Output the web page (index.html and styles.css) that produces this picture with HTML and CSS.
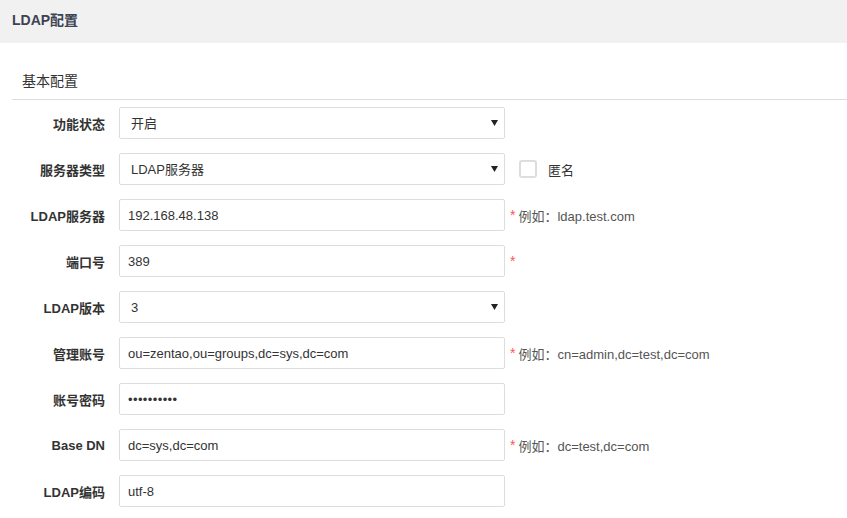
FILE: index.html
```html
<!DOCTYPE html>
<html lang="zh">
<head>
<meta charset="utf-8">
<link rel="stylesheet" href="styles.css">
</head>
<body>
<div class="header">LDAP配置</div>
<div class="section">
  <div class="section-title">基本配置</div>
</div>
<div class="form">
  <div class="row">
    <label class="label">功能状态</label>
    <div class="select-wrap">
      <select class="control select"><option>开启</option></select>
      <svg class="caret" width="7" height="6" viewBox="0 0 7 6"><path d="M0 0H7L3.5 6Z" fill="#222"/></svg>
    </div>
  </div>
  <div class="row">
    <label class="label">服务器类型</label>
    <div class="select-wrap">
      <select class="control select"><option>LDAP服务器</option></select>
      <svg class="caret" width="7" height="6" viewBox="0 0 7 6"><path d="M0 0H7L3.5 6Z" fill="#222"/></svg>
    </div>
    <div class="check"><span class="box"></span><span class="check-text">匿名</span></div>
  </div>
  <div class="row">
    <label class="label">LDAP服务器</label>
    <input class="control input" value="192.168.48.138">
    <div class="hint"><span class="star">*</span>例如：ldap.test.com</div>
  </div>
  <div class="row">
    <label class="label">端口号</label>
    <input class="control input" value="389">
    <div class="hint"><span class="star">*</span></div>
  </div>
  <div class="row">
    <label class="label">LDAP版本</label>
    <div class="select-wrap">
      <select class="control select"><option>3</option></select>
      <svg class="caret" width="7" height="6" viewBox="0 0 7 6"><path d="M0 0H7L3.5 6Z" fill="#222"/></svg>
    </div>
  </div>
  <div class="row">
    <label class="label">管理账号</label>
    <input class="control input" value="ou=zentao,ou=groups,dc=sys,dc=com">
    <div class="hint"><span class="star">*</span>例如：cn=admin,dc=test,dc=com</div>
  </div>
  <div class="row">
    <label class="label">账号密码</label>
    <input class="control input pw" type="password" value="1234567890">
  </div>
  <div class="row">
    <label class="label">Base DN</label>
    <input class="control input" value="dc=sys,dc=com">
    <div class="hint"><span class="star">*</span>例如：dc=test,dc=com</div>
  </div>
  <div class="row">
    <label class="label">LDAP编码</label>
    <input class="control input" value="utf-8">
  </div>
</div>
</body>
</html>
```
FILE: styles.css
```css
* { box-sizing: border-box; }
html, body {
  margin: 0;
  padding: 0;
  background: #fff;
  font-family: "Liberation Sans", Arial, "Noto Sans CJK SC", sans-serif;
  font-size: 13px;
  color: #333;
  overflow: hidden;
}
.header {
  height: 43px;
  line-height: 41px;
  padding-left: 12px;
  background: #f1f1f1;
  font-weight: bold;
  font-size: 14px;
  color: #3c4353;
}
.section {
  margin-left: 12px;
  border-bottom: 1px solid #ddd;
  padding: 28px 0 8px 10px;
}
.section-title {
  font-size: 14px;
  line-height: 20px;
  color: #333;
}
.form {
  padding-top: 7px;
  display: flex;
  flex-direction: column;
  gap: 14px;
}
.row {
  display: flex;
  align-items: center;
  height: 32px;
}
.label {
  width: 105px;
  text-align: right;
  font-weight: bold;
  color: #333;
  margin-right: 14px;
  flex: none;
}
.control {
  width: 386px;
  height: 32px;
  border: 1px solid #ddd;
  border-radius: 2px;
  background: #fff;
  font-family: inherit;
  font-size: 13px;
  color: #333;
  outline: none;
}
.input {
  padding: 0 8px;
  flex: none;
}
.pw {
  font-size: 13px;
  letter-spacing: 0.4px;
}
.select-wrap {
  position: relative;
  flex: none;
}
.select {
  appearance: none;
  -webkit-appearance: none;
  padding: 0 0 0 11px;
  display: block;
}
.caret {
  position: absolute;
  right: 7px;
  top: 13px;
}
.check {
  display: flex;
  align-items: center;
  margin-left: 14px;
}
.box {
  width: 18px;
  height: 18px;
  border: 2px solid #ddd;
  border-radius: 3px;
  margin-right: 11px;
}
.check-text { color: #333; }
.hint {
  margin-left: 5px;
  color: #555;
  display: flex;
  align-items: center;
}
.star {
  color: #f55;
  margin-right: 3px;
  font-size: 14px;
}
```
